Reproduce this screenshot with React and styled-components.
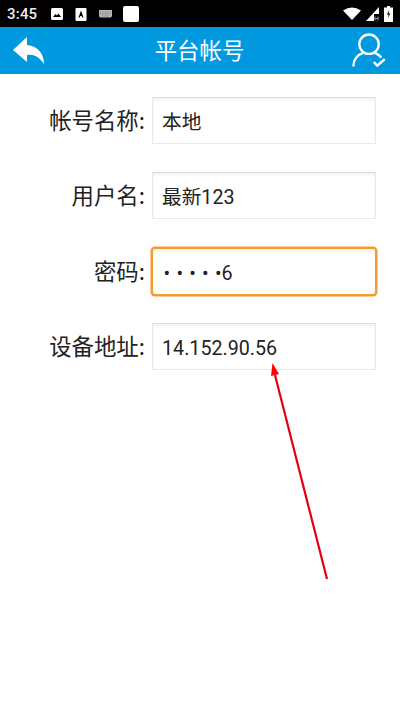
import React from 'react';
import styled, { createGlobalStyle } from 'styled-components';

const GlobalStyle = createGlobalStyle`
    html, body {
        margin: 0;
        padding: 0;
        background: #fff;
    }
    body {
        font-family: Roboto, "Noto Sans CJK SC", sans-serif;
    }
`;

const fields = [
    { label: '帐号名称:', value: '本地' },
    { label: '用户名:', value: '最新123' },
    { label: '密码:', mask: '••••', value: '•6', focused: true },
    { label: '设备地址:', value: '14.152.90.56' },
];

function App() {
    return (
        <Page>
            <GlobalStyle />
            <StatusBar>
                <Time>3:45</Time>
                <StatusLeft>
                    <svg width="14" height="14" viewBox="0 0 14 14">
                        <rect x="1" y="1" width="12" height="12" rx="1.500" fill="#fff" />
                        <path d="M3 10l2.500-3 1.500 1.500 1.500-2 2.500 3.500z" fill="#000" />
                    </svg>
                    <svg width="14" height="14" viewBox="0 0 14 14">
                        <rect x="1.500" y="1" width="11" height="13" rx="1" fill="#fff" />
                        <path d="M4.500 10.500l2.500-7 2.500 7h-1.300l-.5-1.500h-1.400l-.5 1.500z" fill="#000" />
                    </svg>
                    <svg width="15" height="12" viewBox="0 0 15 12">
                        <path d="M1 2h13v6l-1 1.500h-11l-1-1.500z" fill="#bbb" />
                        <path d="M2 4h11M2 6h11M4 8h7" stroke="#444" strokeWidth="0.6" strokeDasharray="1 .7" />
                    </svg>
                    <WhiteSquare />
                </StatusLeft>
                <StatusRight>
                    <svg width="18" height="13" viewBox="0 0 18 13">
                        <path d="M0 3.500Q9-2.500 18 3.500L9 13z" fill="#fff" />
                    </svg>
                    <svg width="13" height="14" viewBox="0 0 13 14">
                        <path d="M13 0v7h-5v7h-8z" fill="#fff" />
                        <path d="M9 9.500v4M12 9.500v4M9.500 11.500h2" stroke="#aaa" strokeWidth="1" />
                    </svg>
                    <svg width="9" height="16" viewBox="0 0 9 16">
                        <path d="M3 0h3v1.500h3v14.500h-9v-14.500h3z" fill="#fff" />
                        <path d="M5.300 4l-2.500 4.500h1.800l-.7 3.500 2.500-4.500h-1.800z" fill="#000" />
                    </svg>
                </StatusRight>
            </StatusBar>
            <Header>
                <BackIcon viewBox="0 0 32 28">
                    <path d="M14 0L0 13l14 12v-7c7-1 12 2 17 9 0-10-6-18-17-19z" fill="#fff" />
                </BackIcon>
                <Title>平台帐号</Title>
                <UserIcon viewBox="0 0 36 36" fill="none" stroke="#fff" strokeWidth="2.400" strokeLinecap="round">
                    <ellipse cx="17.500" cy="11" rx="10" ry="10" />
                    <path d="M1.500 33c0-6 4-11 9-12.500M24.500 20.500c2 .8 3.500 2 5 3.500" />
                    <path d="M23 30l3 3 7-6" />
                </UserIcon>
            </Header>
            <Form>
                {fields.map((f) => (
                    <Row key={f.label}>
                        <Label>{f.label}</Label>
                        <Field $focused={f.focused}>
                            {f.mask && <Mask>{f.mask}</Mask>}
                            <span>{f.value}</span>
                        </Field>
                    </Row>
                ))}
            </Form>
            <Arrow width="400" height="711" viewBox="0 0 400 711">
                <path d="M327 579L275 375" stroke="#e4000f" strokeWidth="2.200" fill="none" />
                <path d="M272.500 363l-1.500 13 8-2z" fill="#f00" />
            </Arrow>
        </Page>
    );
}

export default App;

const Page = styled.div`
    position: relative;
    width: 400px;
    height: 711px;
    overflow: hidden;
    background: #fff;
`;

const StatusBar = styled.div`
    display: flex;
    align-items: center;
    height: 27px;
    padding: 0 7px;
    background: #000;
    color: #fff;
    box-sizing: border-box;
`;

const Time = styled.span`
    font-size: 15px;
    font-weight: 500;
    color: #eee;
    letter-spacing: 0.2px;
`;

const StatusLeft = styled.div`
    display: flex;
    align-items: center;
    gap: 10px;
    margin-left: 13px;
`;

const WhiteSquare = styled.div`
    width: 16px;
    height: 16px;
    border-radius: 2px;
    background: #fff;
`;

const StatusRight = styled.div`
    display: flex;
    align-items: center;
    gap: 5px;
    margin-left: auto;
`;

const Header = styled.div`
    display: flex;
    align-items: center;
    justify-content: space-between;
    height: 47px;
    padding: 0 13px;
    background: #0099e0;
`;

const BackIcon = styled.svg`
    width: 32px;
    height: 28px;
`;

const Title = styled.h1`
    margin: 0 0 4px 2px;
    font-size: 22.4px;
    font-weight: 400;
    color: #fff;
    font-family: "Noto Sans CJK SC", sans-serif;
`;

const UserIcon = styled.svg`
    width: 35px;
    height: 36px;
`;

const Form = styled.div`
    display: flex;
    flex-direction: column;
    gap: 28.33px;
    padding-top: 23px;
`;

const Row = styled.div`
    display: flex;
    align-items: center;
    gap: 7px;
`;

const Label = styled.label`
    width: 145px;
    padding-bottom: 3px;
    text-align: right;
    font-size: 22.4px;
    color: #222;
    font-family: "Noto Sans CJK SC", sans-serif;
`;

const Field = styled.div`
    display: flex;
    align-items: center;
    box-sizing: border-box;
    width: 224px;
    height: 47px;
    padding: 5px 0 0 9px;
    background: #fff;
    font-size: 19.7px;
    line-height: 28px;
    color: #222;
    font-family: Roboto, "Noto Sans CJK SC", sans-serif;
    border: ${(p) => (p.$focused ? '1.5px solid #f89a2c' : '1px solid #e8e8e8')};
    border-top-color: ${(p) => (p.$focused ? '#f89a2c' : '#dcdcdc')};
    border-radius: ${(p) => (p.$focused ? '3px' : '0')};
    box-shadow: inset 0 2px 3px rgba(0, 0, 0, 0.05)
        ${(p) => (p.$focused ? ', 0 0 0 1.5px #f89a2c' : '')};
`;

const Mask = styled.span`
    margin-left: 1.6px;
    letter-spacing: 6.2px;
`;

const Arrow = styled.svg`
    position: absolute;
    top: 0;
    left: 0;
    pointer-events: none;
`;
